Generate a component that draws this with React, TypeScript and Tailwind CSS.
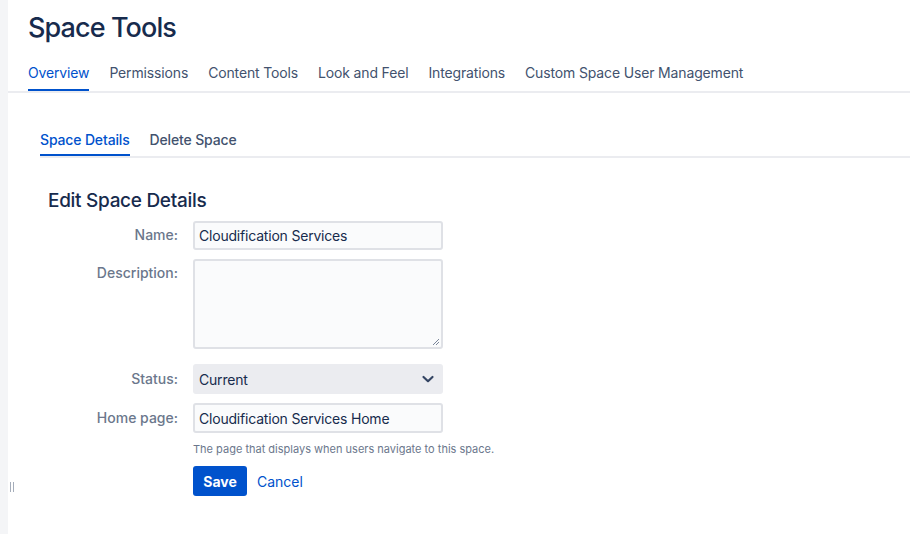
import React from "react";

const font = { fontFamily: "Inter, 'Noto Sans', sans-serif" };

export default function App() {
  const tabs = ["Overview", "Permissions", "Content Tools", "Look and Feel", "Integrations", "Custom Space User Management"];
  return (
    <div className="flex w-[910px] h-[534px] bg-white overflow-hidden" style={font}>
      <div className="relative w-[8px] shrink-0 bg-[#f4f5f7]">
        <div className="absolute left-[10px] top-[482px] flex gap-[2px]">
          <div className="w-[1px] h-[10px] bg-[#a5adba]" />
          <div className="w-[1px] h-[10px] bg-[#a5adba]" />
        </div>
      </div>
      <div className="flex-1 flex flex-col">
        <h1 className="ml-[20px] mt-[10px] text-[27px] leading-[36px] font-medium text-[#172b4d] tracking-[-0.9px]">Space Tools</h1>
        <div className="mt-[17px] flex gap-[20px] pl-[20px] border-b-2 border-[#ebecf0] h-[30px]">
          {tabs.map((t, i) => (
            <div key={t} className={`relative text-[14px] leading-[20px] tracking-[-0.15px] ${i === 0 ? "text-[#0052cc]" : "text-[#42526e]"}`}>
              {t}
              {i === 0 && <div className="absolute left-0 right-0 top-[26px] h-[2px] bg-[#0052cc]" />}
            </div>
          ))}
        </div>
        <div className="ml-[32px] mt-[37px] flex gap-[20px] border-b-2 border-[#ebecf0] h-[28px]">
          {["Space Details", "Delete Space"].map((t, i) => (
            <div key={t} className={`relative text-[14px] leading-[20px] font-medium tracking-[-0.15px] ${i === 0 ? "text-[#0052cc]" : "text-[#42526e]"}`}>
              {t}
              {i === 0 && <div className="absolute left-0 right-0 top-[24px] h-[2px] bg-[#0052cc]" />}
            </div>
          ))}
        </div>
        <h2 className="ml-[40px] mt-[31px] text-[19px] leading-[24px] font-medium text-[#172b4d] tracking-[-0.3px]">Edit Space Details</h2>
        <div className="mt-[8px] flex flex-col">
          <div className="flex items-start">
            <label className="w-[170px] text-right text-[14px] leading-[28px] font-medium text-[#6b778c]">Name:</label>
            <div className="ml-[15px] w-[250px] h-[29px] rounded-[3px] border-2 border-[#dfe1e6] bg-[#fafbfc] px-[4px] flex items-center text-[14px] tracking-[-0.2px] text-[#172b4d]">Cloudification Services</div>
          </div>
          <div className="flex items-start mt-[9px]">
            <label className="w-[170px] text-right text-[14px] leading-[28px] font-medium text-[#6b778c]">Description:</label>
            <div className="relative ml-[15px] w-[250px] h-[90px] rounded-[3px] border-2 border-[#dfe1e6] bg-[#fafbfc]">
              <svg className="absolute right-[1px] bottom-[1px]" width="8" height="8" viewBox="0 0 8 8">
                <path d="M7 1 L1 7 M7 4 L4 7" stroke="#7a869a" strokeWidth="1" />
              </svg>
            </div>
          </div>
          <div className="flex items-start mt-[15px]">
            <label className="w-[170px] text-right text-[14px] leading-[29px] font-medium text-[#6b778c]">Status:</label>
            <div className="ml-[15px] w-[250px] h-[30px] rounded-[3px] bg-[#ebecf0] pl-[6px] pr-[8px] flex items-center justify-between text-[14px] tracking-[-0.2px] text-[#172b4d]">
              <span>Current</span>
              <svg width="14" height="14" viewBox="0 0 14 14">
                <path d="M2.5 5 L7 9.2 L11.5 5" stroke="#344563" strokeWidth="2.2" fill="none" strokeLinecap="round" strokeLinejoin="round" />
              </svg>
            </div>
          </div>
          <div className="flex items-start mt-[9px]">
            <label className="w-[170px] text-right text-[14px] leading-[29px] font-medium text-[#6b778c]">Home page:</label>
            <div className="flex flex-col ml-[15px]">
              <div className="w-[250px] h-[30px] rounded-[3px] border-2 border-[#dfe1e6] bg-[#fafbfc] px-[4px] flex items-center text-[14px] tracking-[-0.2px] text-[#172b4d]">Cloudification Services Home</div>
              <div className="mt-[8px] text-[11px] leading-[16px] text-[#6b778c]">The page that displays when users navigate to this space.</div>
              <div className="mt-[9px] flex items-center gap-[10px]">
                <button className="h-[30px] w-[54px] rounded-[3px] bg-[#0052cc] text-white text-[14px] font-bold">Save</button>
                <span className="text-[14px] text-[#0052cc]">Cancel</span>
              </div>
            </div>
          </div>
        </div>
      </div>
    </div>
  );
}
